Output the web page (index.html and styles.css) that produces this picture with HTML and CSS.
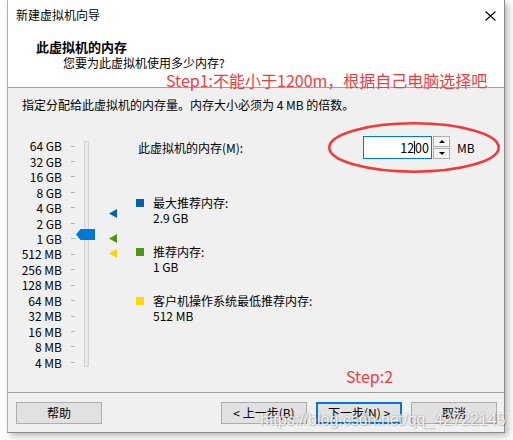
FILE: index.html
```html
<!DOCTYPE html>
<html lang="zh-CN">
<head>
<meta charset="utf-8">
<title>新建虚拟机向导</title>
<link rel="stylesheet" href="styles.css">
</head>
<body>
<div class="window">
  <header class="head">
    <div class="titlebar">
      <span class="title">新建虚拟机向导</span>
      <svg class="close" viewBox="0 0 11 10" width="11" height="10"><path d="M0.5 0.5 L10.5 9.5 M10.5 0.5 L0.5 9.5" stroke="#000" stroke-width="1.1" fill="none"/></svg>
    </div>
    <div class="heading">此虚拟机的内存</div>
    <div class="subtitle">您要为此虚拟机使用多少内存?</div>
    <div class="note">Step1:不能小于1200m，根据自己电脑选择吧</div>
  </header>

  <main class="main">
    <p class="desc">指定分配给此虚拟机的内存量。内存大小必须为 4 MB 的倍数。</p>
    <div class="content">
      <div class="scale">
        <div class="track">
          <svg class="thumb" viewBox="0 0 19 11" width="19" height="11"><polygon points="0,5.5 4.5,0 19,0 19,11 4.5,11" fill="#0078d7"/></svg>
        </div>
        <div class="markers">
          <svg class="marker" style="top:70.7px" viewBox="0 0 8 9" width="8" height="9"><polygon points="8,0 8,9 0,4.5" fill="#0063b1"/></svg>
          <svg class="marker" style="top:95.7px" viewBox="0 0 8 9" width="8" height="9"><polygon points="8,0 8,9 0,4.5" fill="#4c9a10"/></svg>
          <svg class="marker" style="top:110.7px" viewBox="0 0 8 9" width="8" height="9"><polygon points="8,0 8,9 0,4.5" fill="#ffd700"/></svg>
        </div>
        <div class="lbl">64 GB</div><div class="tick"></div>
        <div class="lbl">32 GB</div><div class="tick"></div>
        <div class="lbl">16 GB</div><div class="tick"></div>
        <div class="lbl">8 GB</div><div class="tick"></div>
        <div class="lbl">4 GB</div><div class="tick"></div>
        <div class="lbl">2 GB</div><div class="tick"></div>
        <div class="lbl">1 GB</div><div class="tick"></div>
        <div class="lbl">512 MB</div><div class="tick"></div>
        <div class="lbl">256 MB</div><div class="tick"></div>
        <div class="lbl">128 MB</div><div class="tick"></div>
        <div class="lbl">64 MB</div><div class="tick"></div>
        <div class="lbl">32 MB</div><div class="tick"></div>
        <div class="lbl">16 MB</div><div class="tick"></div>
        <div class="lbl">8 MB</div><div class="tick"></div>
        <div class="lbl">4 MB</div><div class="tick"></div>
      </div>

      <div class="right">
        <div class="memrow">
          <span class="memlabel">此虚拟机的内存(M):</span>
          <div class="input"><span>12</span><span class="caret"></span><span>00</span></div>
          <div class="spin">
            <div class="spinbtn"><svg viewBox="0 0 6 3" width="6" height="3"><polygon points="0,3 3,0 6,3" fill="#000"/></svg></div>
            <div class="spinbtn"><svg viewBox="0 0 6 3" width="6" height="3"><polygon points="0,0 6,0 3,3" fill="#000"/></svg></div>
          </div>
          <span class="unit">MB</span>
        </div>
        <ul class="legend">
          <li class="item"><span class="sq sq-blue"></span><div class="itext"><div>最大推荐内存:</div><div>2.9 GB</div></div></li>
          <li class="item"><span class="sq sq-green"></span><div class="itext"><div>推荐内存:</div><div>1 GB</div></div></li>
          <li class="item"><span class="sq sq-yellow"></span><div class="itext"><div>客户机操作系统最低推荐内存:</div><div>512 MB</div></div></li>
        </ul>
      </div>
    </div>
  </main>

  <footer class="foot">
    <button class="btn btn-help">帮助</button>
    <button class="btn">&lt; 上一步(B)</button>
    <button class="btn btn-default">下一步(N) &gt;</button>
    <button class="btn">取消</button>
  </footer>

  <svg class="ellipse" viewBox="0 0 172 51" width="172" height="51"><ellipse cx="86" cy="25.5" rx="84.7" ry="24.2" fill="none" stroke="#f03a3a" stroke-width="2.6"/></svg>
  <div class="step2">Step:2</div>
  <div class="watermark">https://blog.csdn.net/qq_42722145</div>
</div>
</body>
</html>
```

FILE: styles.css
```css
* { box-sizing: border-box; margin: 0; padding: 0; }

html, body {
  width: 513px;
  height: 440px;
  overflow: hidden;
  background: #ffffff;
}

body {
  font-family: "Noto Sans CJK SC", "Noto Sans", sans-serif;
  font-size: 12px;
  color: #000;
}

.window {
  position: relative;
  margin-left: 7px;
  width: 498px;
  height: 433px;
  border: 1px solid #8a8a8a;
  border-top: none;
  border-left-color: #b0b0b0;
  background: #f0f0f0;
  box-shadow: 3px 3px 7px rgba(0, 0, 0, 0.28);
  display: flex;
  flex-direction: column;
}

/* header */
.head {
  height: 88px;
  flex: 0 0 88px;
  background: #fff;
  border-bottom: 1px solid #a0a0a0;
  display: flex;
  flex-direction: column;
}

.titlebar {
  height: 30px;
  flex: 0 0 30px;
  display: flex;
  align-items: center;
  justify-content: space-between;
  padding: 0 8px 0 8px;
  line-height: 16px;
}

.close { display: block; margin-right: 0; margin-top: 1px; }

.heading {
  margin-top: 9px;
  padding-left: 28px;
  font-size: 13px;
  font-weight: bold;
  line-height: 16px;
}

.subtitle {
  padding-left: 55px;
  line-height: 16px;
}

.note {
  padding-left: 158px;
  font-size: 16px;
  line-height: 18px;
  color: #f43c3c;
  white-space: nowrap;
}

/* main */
.main {
  flex: 1;
  padding-top: 9px;
}

.desc {
  padding-left: 14px;
  line-height: 16px;
}

.content {
  margin-top: 23px;
  display: flex;
  align-items: flex-start;
}

.scale {
  display: grid;
  grid-template-columns: 54px 9px 4px 9px 5px 20px 8px;
  grid-template-rows: repeat(15, 15.46px);
  padding-top: 2.3px;
}

.lbl {
  grid-column: 1;
  text-align: right;
  line-height: 15.46px;
  white-space: nowrap;
}

.tick {
  grid-column: 3;
  align-self: center;
  height: 1px;
  background: #b4b4b4;
}

.track {
  grid-column: 5;
  grid-row: 1 / 16;
  margin: 2.7px 0 3.2px;
  position: relative;
  background: #e8e8e8;
  border: 1px solid #d4d4d4;
}

.thumb {
  position: absolute;
  left: -9px;
  top: 87px;
  display: block;
}

.markers {
  grid-column: 7;
  grid-row: 1 / 16;
  position: relative;
}

.marker {
  position: absolute;
  left: 0;
  display: block;
}

.right {
  margin-left: 19px;
  display: flex;
  flex-direction: column;
}

.memrow {
  display: flex;
  align-items: center;
  height: 23px;
}

.memlabel {
  width: 227px;
  padding-left: 2px;
  line-height: 16px;
}

.input {
  width: 69px;
  height: 23px;
  border: 1px solid #0078d7;
  background: #fff;
  display: flex;
  align-items: center;
  justify-content: flex-end;
  padding-right: 2px;
  line-height: 16px;
  font-size: 12.5px;
}

.caret {
  display: block;
  width: 1px;
  height: 13px;
  background: #000;
}

.spin {
  margin-left: 1px;
  width: 17px;
  height: 23px;
  display: flex;
  flex-direction: column;
  gap: 1px;
}

.spinbtn {
  flex: 1;
  border: 1px solid #adadad;
  background: #f4f4f4;
  display: flex;
  align-items: center;
  justify-content: center;
}

.spinbtn svg { display: block; }

.unit {
  margin-left: 7px;
  line-height: 16px;
}

.legend {
  list-style: none;
  margin-top: 36px;
  display: flex;
  flex-direction: column;
  gap: 19px;
}

.item {
  display: flex;
  align-items: flex-start;
  gap: 9px;
}

.sq {
  display: block;
  width: 8px;
  height: 8px;
  margin-top: 4px;
}
.sq-blue { background: #0063b1; }
.sq-green { background: #4c9a10; }
.sq-yellow { background: #ffd800; }

.itext { line-height: 15px; }

/* footer */
.foot {
  flex: 0 0 40px;
  height: 40px;
  border-top: 1px solid #a0a0a0;
  display: flex;
  align-items: flex-start;
  gap: 9px;
  padding: 9px 7px 0 8px;
}

.btn {
  width: 86px;
  height: 22px;
  border: 1px solid #adadad;
  background: #e1e1e1;
  font-family: "Noto Sans CJK SC", "Noto Sans", sans-serif;
  font-size: 12px;
  line-height: 16px;
  color: #000;
}

.btn-help { margin-right: auto; }

.btn-default {
  border: 2px solid #0078d7;
}

/* annotations drawn over the screenshot */
.ellipse {
  position: absolute;
  left: 320px;
  top: 122px;
  display: block;
}

.step2 {
  position: absolute;
  left: 338px;
  top: 366px;
  font-size: 16px;
  line-height: 20px;
  color: #f43c3c;
}

.watermark {
  position: absolute;
  left: 252px;
  top: 411px;
  font-family: "Liberation Sans", Arial, sans-serif;
  font-size: 16px;
  line-height: 18px;
  color: rgba(255, 255, 255, 0.85);
  text-shadow: 0 0 2px rgba(0, 0, 0, 0.3), 1px 1px 1px rgba(0, 0, 0, 0.15);
  white-space: nowrap;
  pointer-events: none;
}
```
